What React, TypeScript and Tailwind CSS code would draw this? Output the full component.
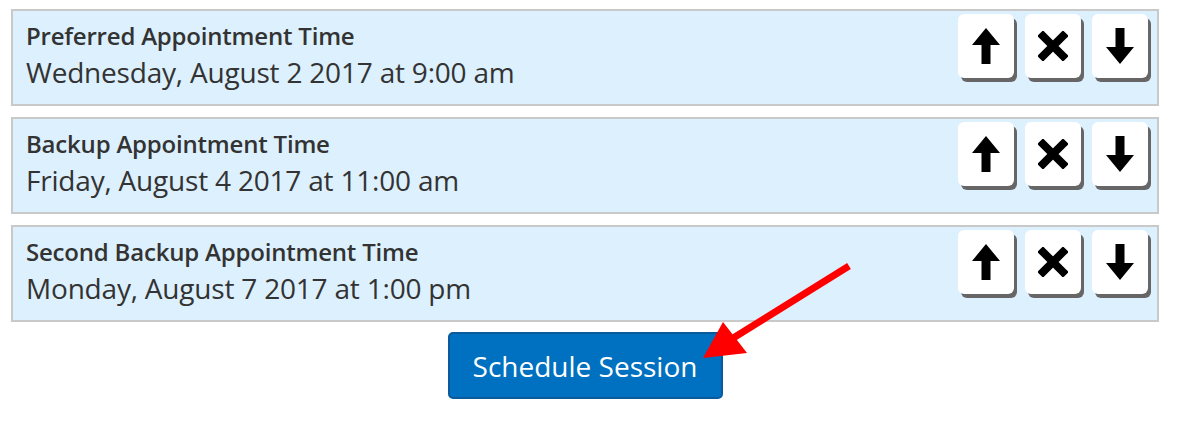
import { FC } from 'react'

const slots = [
  { title: 'Preferred Appointment Time', when: 'Wednesday, August 2 2017 at 9:00 am' },
  { title: 'Backup Appointment Time', when: 'Friday, August 4 2017 at 11:00 am' },
  { title: 'Second Backup Appointment Time', when: 'Monday, August 7 2017 at 1:00 pm' },
]

const UpIcon = () => (
  <svg width="28" height="36" viewBox="0 0 28 36">
    <polygon points="14,0 28,17 18.5,17 18.5,36 9.5,36 9.5,17 0,17" fill="#000" />
  </svg>
)

const DownIcon = () => (
  <svg width="28" height="36" viewBox="0 0 28 36">
    <polygon points="14,36 28,19 18.5,19 18.5,0 9.5,0 9.5,19 0,19" fill="#000" />
  </svg>
)

const CloseIcon = () => (
  <svg width="30" height="30" viewBox="0 0 30 30">
    <path d="M5 5 L25 25 M25 5 L5 25" stroke="#000" strokeWidth="8" strokeLinecap="square" />
  </svg>
)

const IconButton: FC<{ children: React.ReactNode }> = ({ children }) => (
  <button className="flex h-[64px] w-[56px] items-center justify-center rounded-[6px] bg-white shadow-[3px_4px_0_0_#666]">
    {children}
  </button>
)

export default function App() {
  return (
    <div className="relative min-h-[433px] bg-white font-['Open_Sans',sans-serif] text-[#333]">
      <div className="flex flex-col gap-[11px] pl-[11px] pr-[19px] pt-[9px]">
        {slots.map((slot) => (
          <div
            key={slot.title}
            className="flex h-[97px] items-start justify-between border-2 border-[#c9c9c9] bg-[#ddf0fd] pl-[13px] pr-[9px]"
          >
            <div className="pt-[11px] tracking-[-0.2px]">
              <h3 className="text-[24px] font-semibold leading-[28px]">{slot.title}</h3>
              <p className="mt-[6px] text-[28px] leading-[32px]">{slot.when}</p>
            </div>
            <div className="mt-[3px] flex gap-[11px]">
              <IconButton><UpIcon /></IconButton>
              <IconButton><CloseIcon /></IconButton>
              <IconButton><DownIcon /></IconButton>
            </div>
          </div>
        ))}
      </div>
      <div className="flex justify-center pl-[11px] pr-[19px] pt-[10px]">
        <button className="h-[67px] w-[275px] rounded-[5px] border-2 border-[#0b5a9c] bg-[#0070c0] text-[28px] text-white">
          Schedule Session
        </button>
      </div>
      <svg className="pointer-events-none absolute left-0 top-0" width="1178" height="433">
        <line x1="849" y1="266" x2="730" y2="340" stroke="#ff0000" strokeWidth="7" />
        <polygon points="703,358 723,322 747,353" fill="#ff0000" />
      </svg>
    </div>
  )
}
